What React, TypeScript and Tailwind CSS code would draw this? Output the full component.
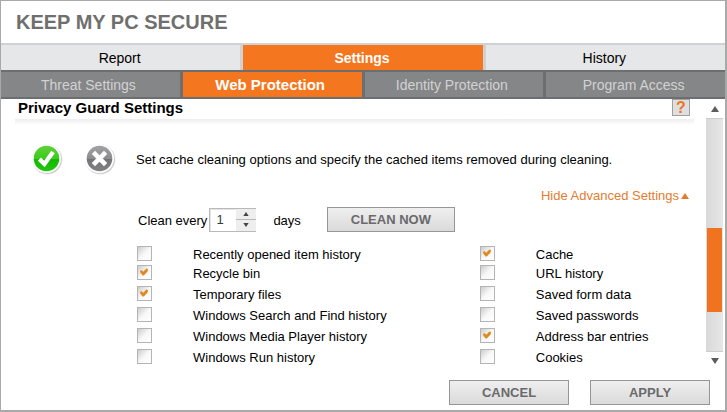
import { useState } from 'react'

const MAIN_TABS = ['Report', 'Settings', 'History']
const SUB_TABS = ['Threat Settings', 'Web Protection', 'Identity Protection', 'Program Access']

const SYSTEM_ITEMS = [
  { id: 'recent', label: 'Recently opened item history', checked: false },
  { id: 'recycle', label: 'Recycle bin', checked: true },
  { id: 'temp', label: 'Temporary files', checked: true },
  { id: 'search', label: 'Windows Search and Find history', checked: false },
  { id: 'media', label: 'Windows Media Player history', checked: false },
  { id: 'run', label: 'Windows Run history', checked: false },
]

const BROWSER_ITEMS = [
  { id: 'cache', label: 'Cache', checked: true },
  { id: 'url', label: 'URL history', checked: false },
  { id: 'forms', label: 'Saved form data', checked: false },
  { id: 'passwords', label: 'Saved passwords', checked: false },
  { id: 'address', label: 'Address bar entries', checked: true },
  { id: 'cookies', label: 'Cookies', checked: false },
]

type Item = { id: string; label: string; checked: boolean }

function OnIcon() {
  return (
    <svg viewBox="0 0 32 32" className="size-8">
      <defs>
        <linearGradient id="on-fill" x1="0" y1="0" x2="0" y2="1">
          <stop offset="0" stopColor="#5fd03a" />
          <stop offset="0.5" stopColor="#3ccb1e" />
          <stop offset="0.52" stopColor="#14b800" />
          <stop offset="1" stopColor="#22c80c" />
        </linearGradient>
      </defs>
      <circle cx="16.3" cy="16.5" r="15.2" fill="#000" opacity="0.06" />
      <circle cx="16.3" cy="16.3" r="14.7" fill="#000" opacity="0.14" />
      <circle cx="15.5" cy="15.5" r="14.5" fill="#fff" />
      <circle cx="15.5" cy="15.5" r="12.8" fill="url(#on-fill)" />
      <path d="M8.4 16.2l5 4.8 8.6-12" fill="none" stroke="#fff" strokeWidth="4.4" />
    </svg>
  )
}

function OffIcon() {
  return (
    <svg viewBox="0 0 32 32" className="size-8">
      <defs>
        <linearGradient id="off-fill" x1="0" y1="0" x2="0" y2="1">
          <stop offset="0" stopColor="#a3a3a5" />
          <stop offset="0.5" stopColor="#8c8c8e" />
          <stop offset="0.52" stopColor="#747476" />
          <stop offset="1" stopColor="#818183" />
        </linearGradient>
      </defs>
      <circle cx="16.3" cy="16.5" r="15.2" fill="#000" opacity="0.06" />
      <circle cx="16.3" cy="16.3" r="14.7" fill="#000" opacity="0.14" />
      <circle cx="15.5" cy="15.5" r="14.5" fill="#fff" />
      <circle cx="15.5" cy="15.5" r="12.8" fill="url(#off-fill)" />
      <path d="M9.4 9.4l12.2 12.2M21.6 9.4L9.4 21.6" fill="none" stroke="#fff" strokeWidth="4.6" />
    </svg>
  )
}

function Triangle(props: { down?: boolean; className: string }) {
  return (
    <svg viewBox="0 0 8 6" className={props.className} fill="currentColor">
      <path d={props.down ? 'M0 0h8L4 6z' : 'M0 6h8L4 0z'} />
    </svg>
  )
}

function CheckList(props: { items: Item[] }) {
  return (
    <ul>
      {props.items.map((item) => (
        <li key={item.id} className="flex h-[21px] items-center first:h-[17px]">
          <span className="relative mr-10 size-4 shrink-0">
            <input
              id={item.id}
              type="checkbox"
              defaultChecked={item.checked}
              className="peer block size-[15px] appearance-none border border-[#b4b4b4] bg-linear-to-br from-[#cccccc] via-[#f8f8f8] to-white"
            />
            <svg
              viewBox="0 0 8 8"
              className="pointer-events-none absolute top-[3px] left-[3px] hidden size-2 peer-checked:block"
            >
              <path d="M0 2.8L1.8 2.2 3.2 3.8 6.4 0.4 8 1 7.6 3.4 3.8 7.4H2.6L0.4 4.8z" fill="#e08a1e" />
            </svg>
          </span>
          <label htmlFor={item.id} className="pt-[2px] whitespace-nowrap">
            {item.label}
          </label>
        </li>
      ))}
    </ul>
  )
}

function GrayButton(props: { label: string; wide?: boolean }) {
  return (
    <button
      type="button"
      className={`${props.wide ? 'w-32' : 'w-30'} h-[25px] border border-[#969696] bg-linear-to-b from-[#efefef] to-[#dadada] text-[13px] font-bold whitespace-nowrap text-[#6a6a6c]`}
    >
      {props.label}
    </button>
  )
}

export default function App() {
  const [tab, setTab] = useState('Settings')
  const [subTab, setSubTab] = useState('Web Protection')
  const [days, setDays] = useState(1)

  return (
    <div className="flex min-h-screen flex-col border-t border-r-2 border-b-2 border-l border-[#a9a9a9] bg-white font-['Liberation_Sans',Arial,sans-serif] text-[13px] leading-4 text-black">
      <h1 className="px-[15px] pt-[9px] pb-[9px] text-[20px] leading-6 font-bold text-[#6f6f6d]">
        KEEP MY PC SECURE
      </h1>

      <nav>
        <div className="grid grid-cols-3 gap-[3px] border-t-2 border-[#cfd1d2] bg-[#cfd1d2] text-[14px]">
          {MAIN_TABS.map((name) => (
            <button
              key={name}
              type="button"
              onClick={() => setTab(name)}
              className={
                name === tab
                  ? 'h-[25px] bg-[#f4761f] pr-[2px] font-bold text-white'
                  : 'h-[25px] bg-[#e6e7e8] pr-[2px] text-black'
              }
            >
              {name}
            </button>
          ))}
        </div>
        <div className="grid grid-cols-4 gap-[3px] border-y-2 border-[#6d6e70] bg-[#6d6e70]">
          {SUB_TABS.map((name) => (
            <button
              key={name}
              type="button"
              onClick={() => setSubTab(name)}
              className={
                name === subTab
                  ? 'h-[25px] bg-[#f4761f] pr-1 text-[15px] font-bold text-white'
                  : 'h-[25px] bg-[#858688] pr-1 text-[14px] text-[#d2d2d2]'
              }
            >
              {name}
            </button>
          ))}
        </div>
      </nav>

      <main className="flex flex-1">
        <section className="flex-1 pr-3 pl-[14px]">
          <div className="flex h-5 items-start justify-between pr-1 pl-[3px]">
            <h2 className="text-[15px] leading-[18px] font-bold">Privacy Guard Settings</h2>
            <button
              type="button"
              aria-label="Help"
              className="flex h-[17px] w-[18px] items-center justify-center border border-[#a0a0a0] bg-[#dfdfdf] text-[16px] leading-none font-bold text-[#ee7623]"
            >
              ?
            </button>
          </div>
          <div className="h-[6px] bg-linear-to-b from-[#eeeeee] to-white" />

          <div className="mt-[18px] flex items-center pl-4">
            <button type="button" aria-label="Turn on" className="mr-[21px]">
              <OnIcon />
            </button>
            <button type="button" aria-label="Turn off" className="mr-5">
              <OffIcon />
            </button>
            <p className="pt-[2px] whitespace-nowrap">
              Set cache cleaning options and specify the cached items removed during cleaning.
            </p>
          </div>

          <div className="mt-[13px] flex justify-end pr-[5px]">
            <a href="#advanced" className="flex items-center gap-[2px] text-[#e47c2f]">
              Hide Advanced Settings
              <Triangle className="h-[6px] w-2" />
            </a>
          </div>

          <form className="mt-[3px] flex items-center pl-[123px]">
            <label htmlFor="days" className="pt-[2px]">
              Clean every
            </label>
            <div className="mr-[17px] ml-[2px] flex h-6 w-[47px] border border-r-0 border-[#b9b9b9]">
              <input
                id="days"
                type="text"
                value={days}
                onChange={(e) => setDays(Number(e.target.value) || 1)}
                className="w-[26px] border-t border-l border-[#e4e4e4] pl-[5px] text-[13px] text-[#3a3a3a] outline-none"
              />
              <div className="flex flex-1 flex-col divide-y divide-[#b9b9b9] bg-[#eeeeee] text-[#444444]">
                <button
                  type="button"
                  aria-label="More days"
                  onClick={() => setDays(days + 1)}
                  className="flex flex-1 items-center justify-center"
                >
                  <Triangle className="h-1 w-[6px]" />
                </button>
                <button
                  type="button"
                  aria-label="Fewer days"
                  onClick={() => setDays(Math.max(1, days - 1))}
                  className="flex flex-1 items-center justify-center"
                >
                  <Triangle down className="h-1 w-[6px]" />
                </button>
              </div>
            </div>
            <span className="mr-[26px] pt-[2px]">days</span>
            <GrayButton label="CLEAN NOW" wide />
          </form>

          <div className="mt-[13px] grid grid-cols-[8fr_5fr] pl-[122px]">
            <CheckList items={SYSTEM_ITEMS} />
            <CheckList items={BROWSER_ITEMS} />
          </div>
        </section>

        <div className="mr-[2px] flex w-[17px] flex-col">
          <button
            type="button"
            aria-label="Scroll up"
            className="flex h-[19px] items-center justify-center text-[#5c5c5c]"
          >
            <Triangle className="h-[6px] w-2" />
          </button>
          <div className="flex flex-1 flex-col border-y border-[#cccccc] bg-linear-to-r from-[#d9d9d9] to-[#e6e6e6] px-px">
            <div className="flex-110" />
            <div className="flex-85 bg-[#f0731f]" />
            <div className="flex-39" />
          </div>
          <button
            type="button"
            aria-label="Scroll down"
            className="flex h-[17px] items-center justify-center text-[#5c5c5c]"
          >
            <Triangle down className="h-[6px] w-2" />
          </button>
        </div>
      </main>

      <footer className="flex justify-end gap-[21px] pt-[11px] pr-[15px] pb-[5px]">
        <GrayButton label="CANCEL" />
        <GrayButton label="APPLY" />
      </footer>
    </div>
  )
}
